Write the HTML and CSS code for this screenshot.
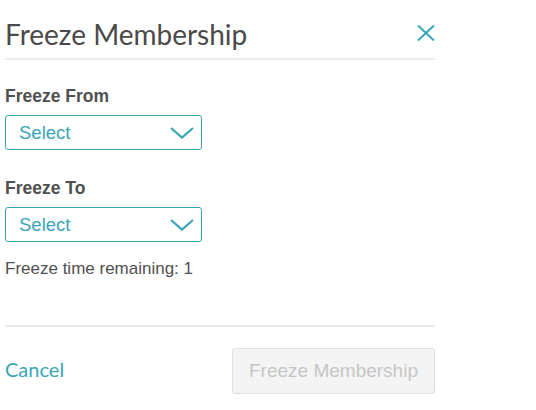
FILE: index.html
```html
<!DOCTYPE html>
<html>
<head>
<meta charset="utf-8">
<link rel="stylesheet" href="styles.css">
</head>
<body>
<div class="modal">
  <div class="header">
    <h1 class="title">Freeze Membership</h1>
    <button class="close" aria-label="Close">
      <svg width="18" height="16" viewBox="0 0 18 16"><path d="M1 0.5 L17 15.5 M17 0.5 L1 15.5" stroke="#3aa5b9" stroke-width="2" fill="none"/></svg>
    </button>
  </div>
  <div class="body">
    <div class="field">
      <label class="label">Freeze From</label>
      <div class="select">
        <span>Select</span>
        <svg class="chev" width="24" height="12" viewBox="0 0 24 12"><path d="M1 1 L12 10.5 L23 1" stroke="#3aa5b9" stroke-width="2.2" fill="none"/></svg>
      </div>
    </div>
    <div class="field second">
      <label class="label">Freeze To</label>
      <div class="select">
        <span>Select</span>
        <svg class="chev" width="24" height="12" viewBox="0 0 24 12"><path d="M1 1 L12 10.5 L23 1" stroke="#3aa5b9" stroke-width="2.2" fill="none"/></svg>
      </div>
    </div>
    <p class="remaining">Freeze time remaining: 1</p>
  </div>
  <div class="footer">
    <a class="cancel" href="#">Cancel</a>
    <button class="submit" disabled>Freeze Membership</button>
  </div>
</div>
</body>
</html>
```
FILE: styles.css
```css
html, body {
  margin: 0;
  padding: 0;
  background: #ffffff;
}
.modal {
  width: 430px;
  margin-left: 5px;
  font-family: "Liberation Sans", Arial, sans-serif;
  color: #4d4d4d;
}
.header {
  display: flex;
  align-items: center;
  justify-content: space-between;
  height: 60px;
  padding-top: 10px;
  box-sizing: border-box;
  border-bottom: 2px solid #ececec;
}
.title {
  margin: 0;
  font-family: Lato, "Open Sans", sans-serif;
  font-weight: 400;
  font-size: 28px;
  line-height: 32px;
  color: #4a4a4a;
}
.close {
  border: 0;
  background: none;
  padding: 0;
  width: 18px;
  height: 16px;
  margin-bottom: 3px;
  display: flex;
}
.body {
  padding-top: 26px;
  padding-bottom: 46px;
  border-bottom: 2px solid #ececec;
}
.field {
  display: flex;
  flex-direction: column;
  gap: 9px;
}
.field.second {
  margin-top: 28px;
}
.label {
  font-weight: 700;
  font-size: 17.5px;
  line-height: 20px;
  color: #505050;
}
.select {
  width: 197px;
  height: 35px;
  box-sizing: border-box;
  border: 1px solid #3aa5b9;
  border-radius: 3px;
  display: flex;
  align-items: center;
  justify-content: space-between;
  padding: 0 7px 0 13px;
  color: #3aa5b9;
  font-size: 18.5px;
}
.chev {
  display: block;
}
.remaining {
  margin: 17px 0 0;
  font-size: 17px;
  line-height: 20px;
  color: #505050;
}
.footer {
  display: flex;
  align-items: center;
  justify-content: space-between;
  padding-top: 21px;
}
.cancel {
  font-family: Lato, "Open Sans", sans-serif;
  font-size: 20px;
  color: #3aa5b9;
  text-decoration: none;
  padding-bottom: 5px;
}
.submit {
  width: 203px;
  height: 46px;
  box-sizing: border-box;
  border: 1px solid #e0e0e0;
  border-radius: 3px;
  background: #f4f4f4;
  color: #c6c6c6;
  font-family: "Liberation Sans", Arial, sans-serif;
  font-size: 19px;
  padding: 0;
}
```
